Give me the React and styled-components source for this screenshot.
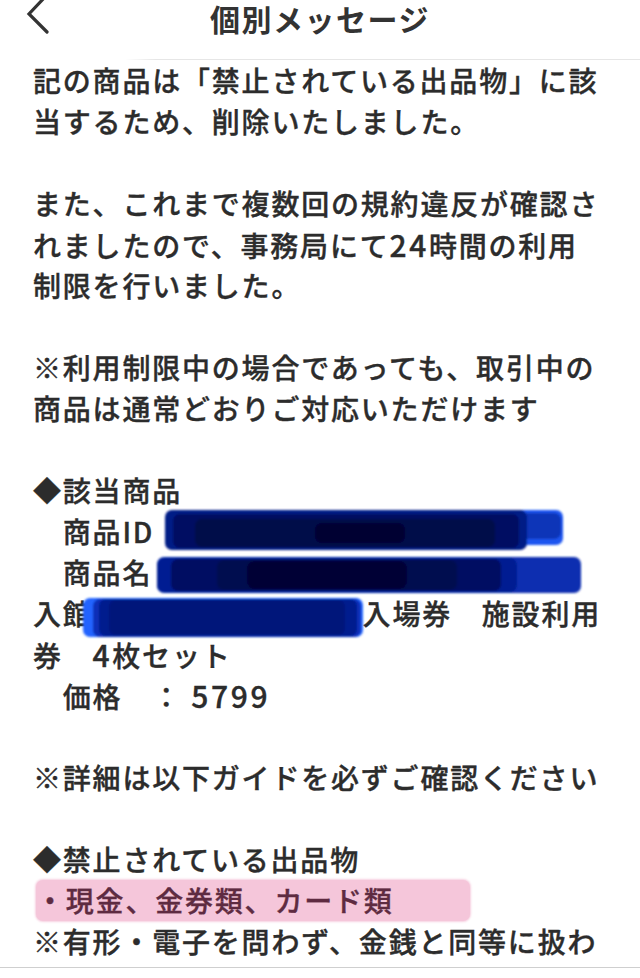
import React from "react";
import styled, { createGlobalStyle } from "styled-components";

const Global = createGlobalStyle`
  html, body {
    margin: 0;
    padding: 0;
    background: #ffffff;
  }
  body {
    font-family: "Noto Sans CJK JP", "Noto Sans", sans-serif;
    -webkit-font-smoothing: antialiased;
  }
`;

const Screen = styled.div`
  width: 640px;
  height: 978px;
  overflow: hidden;
  background: #ffffff;
  display: flex;
  flex-direction: column;
`;

const Header = styled.header`
  height: 60px;
  flex: none;
  display: grid;
  grid-template-columns: 1fr auto 1fr;
  align-items: start;
  position: relative;
`;

const BackButton = styled.button`
  justify-self: start;
  border: 0;
  background: none;
  padding: 0 0 0 26px;
  margin: 0;
  height: 34px;
  display: flex;
  align-items: flex-start;
  color: #333333;
  cursor: pointer;
`;

const Title = styled.h1`
  margin: 0;
  padding-top: 1px;
  font-size: 30px;
  line-height: 34px;
  font-weight: 700;
  letter-spacing: 1.5px;
  color: #333333;
`;

const HeaderRule = styled.div`
  position: absolute;
  left: 125px;
  right: 0;
  bottom: 0;
  height: 1px;
  background: linear-gradient(90deg, rgba(225, 225, 225, 0) 0%, #e6e6e6 6%, #e6e6e6 100%);
`;

const Message = styled.div`
  padding-left: 33px;
  display: flex;
  flex-direction: column;
  color: #2c2c2c;
  font-size: 28px;
  font-weight: 500;
  letter-spacing: 1.8px;
  -webkit-text-stroke: 0.35px #2c2c2c;
`;

const Line = styled.div`
  position: relative;
  height: 41px;
  line-height: 41px;
  white-space: pre;
`;

const Num = styled.span`
  font-size: 30px;
  letter-spacing: 2.6px;
`;

const Gap = styled.span`
  display: inline-block;
  width: ${(p) => p.$w}px;
`;

const Mark = styled.span`
  display: inline-block;
  width: 434px;
  height: 41px;
  margin-left: 3px;
  border-radius: 7px;
  background: #f5c6da;
  box-shadow: 0 0 2px 1px rgba(245, 198, 218, 0.8);
  color: #5e2b41;
  -webkit-text-stroke: 0.35px #5e2b41;
`;

const BottomRule = styled.div`
  margin-top: 5px;
  height: 1px;
  background: #cfcfcf;
  flex: none;
`;

const Ink = styled.svg`
  position: absolute;
  left: ${(p) => p.$x}px;
  top: ${(p) => p.$y}px;
  overflow: visible;
  pointer-events: none;
`;

function ChevronLeft() {
  return (
    <svg width="24" height="34" viewBox="0 0 24 34" fill="none">
      <polyline
        points="19,-3 3,14 21,32"
        stroke="#333333"
        strokeWidth="3.2"
        strokeLinecap="round"
        strokeLinejoin="miter"
      />
    </svg>
  );
}

/* marker strokes used to black out private values; coordinates are relative
   to the line box the stroke sits on */
function Redaction({ x, y, w, h, strokes, id }) {
  return (
    <Ink $x={x} $y={y} width={w} height={h} viewBox={`0 0 ${w} ${h}`}>
      <defs>
        <filter id={id} x="-5%" y="-20%" width="110%" height="140%">
          <feGaussianBlur stdDeviation="1.3" />
        </filter>
      </defs>
      <g filter={`url(#${id})`}>
        {strokes.map((s, i) => (
          <rect key={i} x={s[0]} y={s[1]} width={s[2]} height={s[3]} rx={s[5] ?? 7} fill={s[4]} />
        ))}
      </g>
    </Ink>
  );
}

export default function App() {
  return (
    <Screen>
      <Global />
      <Header>
        <BackButton aria-label="戻る">
          <ChevronLeft />
        </BackButton>
        <Title>個別メッセージ</Title>
        <span />
        <HeaderRule />
      </Header>

      <Message>
        <Line>記の商品は「禁止されている出品物」に該</Line>
        <Line>当するため、削除いたしました。</Line>
        <Line />
        <Line>また、これまで複数回の規約違反が確認さ</Line>
        <Line>{"れましたので、事務局にて"}<Num>24</Num>{"時間の利用"}</Line>
        <Line>制限を行いました。</Line>
        <Line />
        <Line>※利用制限中の場合であっても、取引中の</Line>
        <Line>商品は通常どおりご対応いただけます</Line>
        <Line />
        <Line>◆該当商品</Line>
        <Line>
          {"　商品ID"}
          <Redaction
            id="inkId"
            x={132}
            y={-2}
            w={400}
            h={42}
            strokes={[
              [300, 1, 98, 35, "#1d55f0"],
              [300, 4, 96, 26, "#0d36b8"],
              [0, 1, 362, 40, "#061a86"],
              [8, 5, 346, 34, "#020d62"],
              [30, 10, 300, 28, "#000748"],
              [150, 14, 90, 20, "#000430", 8],
            ]}
          />
        </Line>
        <Line>
          {"　商品名"}
          <Redaction
            id="inkName"
            x={124}
            y={5}
            w={426}
            h={37}
            strokes={[
              [0, 0, 424, 36, "#0a2fb0"],
              [0, 1, 360, 34, "#061f92"],
              [14, 2, 330, 32, "#020d62"],
              [60, 3, 240, 30, "#000a50"],
              [90, 4, 160, 28, "#000535", 8],
            ]}
          />
        </Line>
        <Line>
          {"入館"}
          <Gap $w={270} />
          {"入場券　施設利用"}
          <Redaction
            id="inkName2"
            x={50}
            y={5}
            w={282}
            h={40}
            strokes={[
              [0, 0, 280, 39, "#2264ff"],
              [10, 1, 268, 38, "#0a2fb8"],
              [16, 1, 258, 37, "#031c8e"],
              [26, 2, 236, 35, "#01147a"],
            ]}
          />
        </Line>
        <Line>{"券　"}<Num>4</Num>{"枚セット"}</Line>
        <Line>{"　価格　："}<Num> 5799</Num></Line>
        <Line />
        <Line>※詳細は以下ガイドを必ずご確認ください</Line>
        <Line />
        <Line>◆禁止されている出品物</Line>
        <Line>
          <Mark>・現金、金券類、カード類</Mark>
        </Line>
        <Line>※有形・電子を問わず、金銭と同等に扱わ</Line>
      </Message>
      <BottomRule />
    </Screen>
  );
}
